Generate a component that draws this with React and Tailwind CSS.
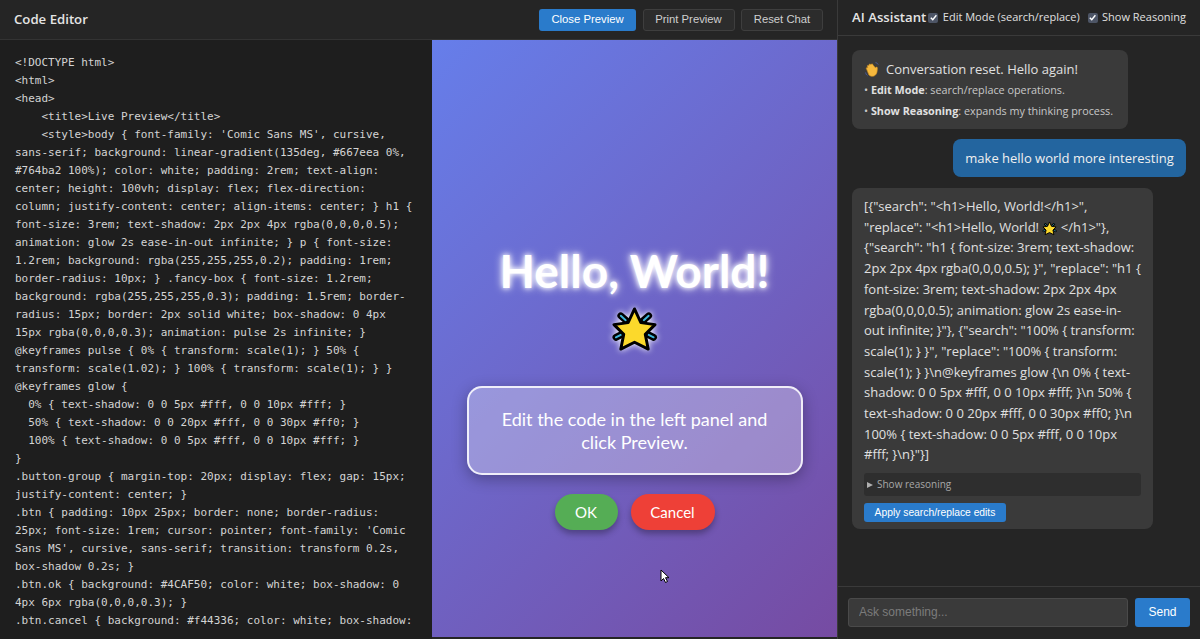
const CODE = `<!DOCTYPE html>
<html>
<head>
    <title>Live Preview</title>
    <style>body { font-family: 'Comic Sans MS', cursive,
sans-serif; background: linear-gradient(135deg, #667eea 0%,
#764ba2 100%); color: white; padding: 2rem; text-align:
center; height: 100vh; display: flex; flex-direction:
column; justify-content: center; align-items: center; } h1 {
font-size: 3rem; text-shadow: 2px 2px 4px rgba(0,0,0,0.5);
animation: glow 2s ease-in-out infinite; } p { font-size:
1.2rem; background: rgba(255,255,255,0.2); padding: 1rem;
border-radius: 10px; } .fancy-box { font-size: 1.2rem;
background: rgba(255,255,255,0.3); padding: 1.5rem; border-
radius: 15px; border: 2px solid white; box-shadow: 0 4px
15px rgba(0,0,0,0.3); animation: pulse 2s infinite; }
@keyframes pulse { 0% { transform: scale(1); } 50% {
transform: scale(1.02); } 100% { transform: scale(1); } }
@keyframes glow {
  0% { text-shadow: 0 0 5px #fff, 0 0 10px #fff; }
  50% { text-shadow: 0 0 20px #fff, 0 0 30px #ff0; }
  100% { text-shadow: 0 0 5px #fff, 0 0 10px #fff; }
}
.button-group { margin-top: 20px; display: flex; gap: 15px;
justify-content: center; }
.btn { padding: 10px 25px; border: none; border-radius:
25px; font-size: 1rem; cursor: pointer; font-family: 'Comic
Sans MS', cursive, sans-serif; transition: transform 0.2s,
box-shadow 0.2s; }
.btn.ok { background: #4CAF50; color: white; box-shadow: 0
4px 6px rgba(0,0,0,0.3); }
.btn.cancel { background: #f44336; color: white; box-shadow:`;

function Star({ size, stroke = 3 }) {
  return (
    <svg width={size} height={size} viewBox="0 0 48 48" className="inline-block">
      <g stroke="#000" strokeWidth="7" strokeLinecap="round">
        <path d="M10 10l8 7M38.500 10l-8 7M5 32l8-4M43.500 32l-8-4" />
      </g>
      <g stroke="#3fb6d8" strokeWidth="2" strokeLinecap="round">
        <path d="M10 10l5 4.500M38.500 10l-5 4.500M5 32l5-2.500M43.500 32l-5-2.500" />
      </g>
      <path
        d="M24 3L30.500 17 45 19 35 29 38 44 24 37 10 44 13 29 3 19 17.500 17z"
        fill="#fcd92b"
        stroke="#000"
        strokeWidth={stroke}
        strokeLinejoin="round"
      />
    </svg>
  );
}

function Wave() {
  return (
    <svg width="17" height="17" viewBox="0 0 20 20" className="inline-block">
      <path
        d="M3 9.500c-1-1.200.4-2.500 1.500-1.500L4 6.500c-.6-1.300 1-2.200 1.800-1l.2-.800c-.2-1.300 1.500-1.700 2-.5l.6-.3c.8-1 2-.3 2 .8l2.800 3.200c.8-1.200 2.600-.8 2.400.8-.3 2.800-.2 5-1.600 7-2.200 3-6 3-8.400.8z"
        fill="#f5b83d"
        stroke="#c98a1e"
        strokeWidth="0.700"
      />
      <path d="M2 14c.2 1.200.8 2.200 1.800 3M14 2c1.200.2 2 .8 2.500 1.800" fill="none" stroke="#4a5fb0" strokeWidth="1" strokeLinecap="round" />
    </svg>
  );
}

function Check({ label, className }) {
  return (
    <label className={"flex items-center gap-[4.500px] text-[11px] whitespace-nowrap text-[#e0e0e0] " + className}>
      <span className="flex h-[10px] w-[10px] items-center justify-center rounded-[2px] bg-[#4d5566]">
        <svg width="9" height="9" viewBox="0 0 10 10">
          <path d="M2 5.200l2.200 2.300L8.200 2.500" fill="none" stroke="#fff" strokeWidth="1.600" />
        </svg>
      </span>
      {label}
    </label>
  );
}

export default function App() {
  return (
    <div className="flex h-[639px] w-[1200px] overflow-hidden bg-[#252525] font-['Open_Sans','Noto_Sans',sans-serif] text-[#e0e0e0]">
      <div className="flex w-[838px] flex-col border-r border-[#3a3a3a]">
        <header className="flex h-[40px] items-center justify-between border-b border-[#333] bg-[#252525] px-[14px]">
          <h2 className="text-[13.200px] font-semibold text-[#e4e4e4]">Code Editor</h2>
          <div className="flex gap-[6.500px] font-['Liberation_Sans',Arial,sans-serif] text-[11.300px]">
            <button className="h-[22px] w-[97px] rounded-[3px] bg-[#2a7bcb] text-white">Close Preview</button>
            <button className="h-[22px] w-[92px] rounded-[3px] border border-[#3e3e3e] bg-[#2c2c2c] text-[#cfcfcf]">Print Preview</button>
            <button className="h-[22px] w-[82px] rounded-[3px] border border-[#3e3e3e] bg-[#2c2c2c] text-[#cfcfcf]">Reset Chat</button>
          </div>
        </header>
        <div className="flex min-h-0 flex-1">
          <pre className="w-[432px] overflow-hidden bg-[#1e1e1e] pt-[14px] pl-[15px] font-['DejaVu_Sans_Mono',monospace] text-[11px] leading-[18px] text-[#d4d4d4]">
            {CODE}
          </pre>
          <div className="relative mb-[2px] flex w-[405px] flex-col items-center justify-center bg-[linear-gradient(135deg,#667eea_0%,#764ba2_100%)] pt-[96px] font-['Lato','Open_Sans',sans-serif] text-white">
            <h1 className="flex w-[340px] flex-col items-center text-center text-[46px] leading-[55px] font-bold [text-shadow:0_0_5px_#fff,0_0_10px_#fff]">
              <span className="whitespace-nowrap">Hello, World!</span>
              <span className="mt-[4px] flex h-[55px] items-center drop-shadow-[0_0_3px_#fff]">
                <Star size={47} />
              </span>
            </h1>
            <div className="mt-[29px] box-border h-[89px] w-[336px] rounded-[15px] border-2 border-white/85 bg-white/30 px-[24px] py-[20px] text-center text-[18px] leading-[23px] shadow-[0_4px_15px_rgba(0,0,0,0.3)]">
              Edit the code in the left panel and click Preview.
            </div>
            <div className="mt-[19px] flex gap-[13px] text-[15px]">
              <button className="h-[36px] w-[63px] rounded-[25px] bg-[#55ad55] text-white shadow-[0_4px_6px_rgba(0,0,0,0.3)]">OK</button>
              <button className="h-[36px] w-[84px] rounded-[25px] bg-[#ee4037] text-white shadow-[0_4px_6px_rgba(0,0,0,0.3)]">Cancel</button>
            </div>
            <svg width="10" height="15" viewBox="0 0 10 15" className="absolute top-[529px] left-[228px]">
              <path d="M1 1v11l2.500-2.500 2 4 2-1-2-3.800H9z" fill="#fff" stroke="#000" strokeWidth="1" />
            </svg>
          </div>
        </div>
      </div>
      <aside className="flex w-[362px] flex-col">
        <header className="flex h-[36px] items-center border-b border-[#3a3a3a] px-[14px]">
          <h2 className="mr-[2px] text-[13.200px] font-semibold whitespace-nowrap text-[#e4e4e4]">AI Assistant</h2>
          <Check label="Edit Mode (search/replace)" className="" />
          <Check label="Show Reasoning" className="ml-auto" />
        </header>
        <div className="flex min-h-0 flex-1 flex-col items-start px-[14px] pt-[14px]">
          <div className="h-[79px] w-[276px] rounded-[8px] bg-[#3a3a3a] px-[12px] py-[9px]">
            <div className="flex items-center gap-[5px] text-[13px] leading-[21px] text-[#e0e0e0]">
              <Wave />
              <span>Conversation reset. Hello again!</span>
            </div>
            <p className="-mt-[1px] text-[10.800px] leading-[21px] text-[#c8c8c8]">
              • <b className="font-bold text-[#e0e0e0]">Edit Mode</b>: search/replace operations.
            </p>
            <p className="text-[10.800px] leading-[21px] whitespace-nowrap text-[#c8c8c8]">
              • <b className="font-bold text-[#e0e0e0]">Show Reasoning</b>: expands my thinking process.
            </p>
          </div>
          <div className="mt-[10px] ml-[101px] flex h-[38px] w-[233px] items-center justify-center rounded-[8px] bg-[#23659f] pt-[1px] text-[13px] text-[#f0f0f0]">
            make hello world more interesting
          </div>
          <div className="mt-[11px] h-[341px] w-[301px] rounded-[8px] bg-[#3a3a3a] px-[12px] pt-[8px]">
            <div className="text-[13px] leading-[20.700px] whitespace-pre text-[#e0e0e0]">
              {'[{"search": "<h1>Hello, World!</h1>",\n"replace": "<h1>Hello, World! '}
              <Star size={15} stroke={3} />
              {' </h1>"},\n{"search": "h1 { font-size: 3rem; text-shadow:\n2px 2px 4px rgba(0,0,0,0.5); }", "replace": "h1 {\nfont-size: 3rem; text-shadow: 2px 2px 4px\nrgba(0,0,0,0.5); animation: glow 2s ease-in-\nout infinite; }"}, {"search": "100% { transform:\nscale(1); } }", "replace": "100% { transform:\nscale(1); } }\\n@keyframes glow {\\n 0% { text-\nshadow: 0 0 5px #fff, 0 0 10px #fff; }\\n 50% {\ntext-shadow: 0 0 20px #fff, 0 0 30px #ff0; }\\n\n100% { text-shadow: 0 0 5px #fff, 0 0 10px\n#fff; }\\n}"}]'}
            </div>
            <div className="mt-[8px] flex h-[23px] items-center gap-[4px] rounded-[3px] bg-[#2e2e2e] pl-[3px] text-[10px] text-[#a8a8a8]">
              <span className="h-0 w-0 border-y-[3.500px] border-l-[6px] border-y-transparent border-l-[#b0b0b0]" />
              <span>Show reasoning</span>
            </div>
            <button className="mt-[7px] h-[19px] w-[142px] rounded-[3px] bg-[#2a7bcb] font-['Liberation_Sans',Arial,sans-serif] text-[10.300px] text-white">
              Apply search/replace edits
            </button>
          </div>
        </div>
        <footer className="flex h-[53px] items-center gap-[7px] border-t border-[#3a3a3a] px-[10px] pb-[2px] font-['Liberation_Sans',Arial,sans-serif]">
          <input
            readOnly
            placeholder="Ask something..."
            className="h-[29px] w-[280px] rounded-[3px] border border-[#4a4a4a] bg-[#3a3a3a] px-[10px] text-[12px] outline-none placeholder:text-[#7c7c7c]"
          />
          <button className="h-[29px] w-[55px] rounded-[3px] bg-[#2a7bcb] text-[12px] text-white">Send</button>
        </footer>
      </aside>
    </div>
  );
}
